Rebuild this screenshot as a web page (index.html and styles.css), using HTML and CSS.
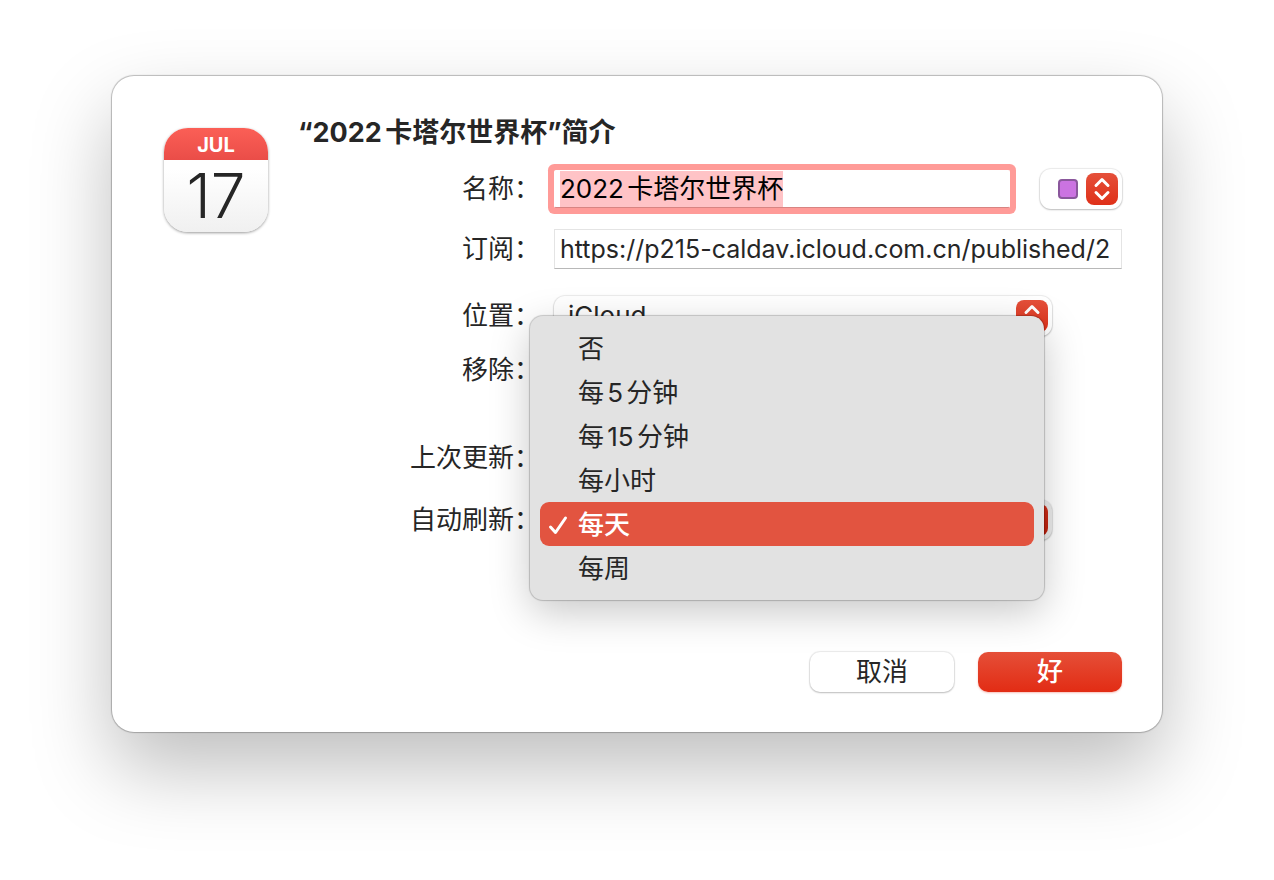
FILE: index.html
```html
<!DOCTYPE html>
<html lang="zh-CN">
<head>
    <meta charset="UTF-8">
    <meta name="viewport" content="width=device-width, initial-scale=1.0">
    <title>2022卡塔尔世界杯</title>
    <link rel="stylesheet" href="styles.css">
</head>
<body>
    <main class="dialog">
        <!-- Calendar icon -->
        <div class="calendar-icon">
            <div class="month">JUL</div>
            <div class="day">17</div>
        </div>

        <form class="content">
            <h1>“2022卡塔尔世界杯”简介</h1>

            <div class="row">
                <label for="name">名称：</label>
                <div class="field name-field">
                    <input type="text" id="name" class="text-input" value="2022卡塔尔世界杯" autocomplete="off" spellcheck="false">
                    <button type="button" class="color-btn" aria-label="颜色">
                        <span class="swatch"></span>
                        <svg class="stepper" viewBox="0 0 32 32" aria-hidden="true">
                            <path d="M10 12.500l6-6 6 6M10 19.500l6 6 6-6"/>
                        </svg>
                    </button>
                </div>
            </div>

            <div class="row row-url">
                <label for="url">订阅：</label>
                <div class="field">
                    <input type="text" id="url" class="text-input" value="https://p215-caldav.icloud.com.cn/published/2" readonly>
                </div>
            </div>

            <div class="row row-location">
                <label for="location">位置：</label>
                <div class="field popup">
                    <select id="location">
                        <option>iCloud</option>
                    </select>
                    <svg class="stepper" viewBox="0 0 32 32" aria-hidden="true">
                        <path d="M10 12.500l6-6 6 6M10 19.500l6 6 6-6"/>
                    </svg>
                </div>
            </div>

            <div class="row row-remove">
                <span class="label">移除：</span>
            </div>

            <div class="row row-updated">
                <span class="label">上次更新：</span>
            </div>

            <div class="row row-refresh">
                <label for="refresh">自动刷新：</label>
                <div class="field popup pressed">
                    <select id="refresh">
                        <option>每天</option>
                    </select>
                    <svg class="stepper" viewBox="0 0 32 32" aria-hidden="true">
                        <path d="M10 12.500l6-6 6 6M10 19.500l6 6 6-6"/>
                    </svg>

                    <!-- Open menu -->
                    <ul class="menu" role="listbox" aria-label="自动刷新">
                        <li role="option">否</li>
                        <li role="option">每5分钟</li>
                        <li role="option">每15分钟</li>
                        <li role="option">每小时</li>
                        <li role="option" class="selected" aria-selected="true">
                            <svg class="check" viewBox="0 0 20 22" aria-hidden="true">
                                <path d="M2.500 13l5 5.500L17.500 4"/>
                            </svg>
                            每天
                        </li>
                        <li role="option">每周</li>
                    </ul>
                </div>
            </div>

            <div class="actions">
                <button type="button" class="btn">取消</button>
                <button type="submit" class="btn btn-primary">好</button>
            </div>
        </form>
    </main>

    <script>
        const nameInput = document.getElementById('name');
        nameInput.focus();
        nameInput.select();
    </script>
</body>
</html>
```
FILE: styles.css
```css
/* Base styles */
* {
    box-sizing: border-box;
}

body {
    margin: 0;
    min-height: 100vh;
    padding: 76px 112px;
    background-color: #fff;
    color: #262626;
    font-family: Inter, 'Noto Sans CJK SC', sans-serif;
    font-size: 26px;
    line-height: 40px;
    text-autospace: normal;
}

input,
select,
button {
    font: inherit;
    color: inherit;
    text-autospace: inherit;
}

/* Dialog */
.dialog {
    display: flex;
    align-items: flex-start;
    gap: 30px;
    padding: 37px 40px 40px 52px;
    background-color: #fff;
    border-radius: 22px;
    box-shadow: 0 0 1px 1px rgba(0, 0, 0, 0.25), 0 36px 80px rgba(0, 0, 0, 0.26);
}

/* Calendar icon */
.calendar-icon {
    flex: none;
    width: 104px;
    height: 104px;
    margin-top: 15px;
    border-radius: 24px;
    overflow: hidden;
    text-align: center;
    background: linear-gradient(#fff 40%, #f0f0f0);
    box-shadow: 0 1px 3px rgba(0, 0, 0, 0.4);
}

.month {
    height: 32px;
    line-height: 34px;
    background: linear-gradient(#fb5f56, #ea4d48);
    color: #fff;
    font-size: 20px;
    font-weight: 700;
}

.day {
    font-size: 62px;
    font-weight: 300;
    line-height: 72px;
}

/* Form */
.content {
    flex: 1;
    min-width: 0;
}

h1 {
    margin: 0 0 16px;
    font-size: 27px;
    font-weight: 700;
    line-height: 40px;
}

.row {
    display: flex;
    gap: 14px;
    height: 40px;
}

.row-url {
    margin-top: 20px;
}

.row-location {
    margin-top: 27px;
}

.row-remove {
    margin-top: 14px;
}

.row-updated {
    margin-top: 48px;
}

.row-refresh {
    margin-top: 22px;
}

.row label,
.label {
    flex: none;
    width: 242px;
    text-align: right;
}

.field {
    flex: 1;
    min-width: 0;
    display: flex;
}

.text-input {
    flex: 1;
    min-width: 0;
    height: 40px;
    padding: 0 2px 0 5px;
    border: 1px solid #e4e4e4;
    border-bottom-color: #b8b8b8;
    border-radius: 0;
    background-color: #fff;
    outline: none;
}

#url {
    font-size: 25px;
}

.name-field {
    align-items: center;
    gap: 30px;
}

.name-field .text-input {
    height: 38px;
    color: #000;
}

.text-input:focus {
    border-color: #fff;
    border-bottom-color: #d88482;
    border-radius: 2px;
    box-shadow: 0 0 0 6px #ff9b98;
}

.text-input::selection {
    background-color: #ffc3c6;
    color: #000;
}

.color-btn {
    display: flex;
    align-items: center;
    justify-content: flex-end;
    gap: 8px;
    width: 82px;
    height: 40px;
    padding: 0 4px;
    border: none;
    border-radius: 11px;
    background-color: #fff;
    box-shadow: 0 0 1px 1px rgba(0, 0, 0, 0.08), 0 1px 2px rgba(0, 0, 0, 0.2);
}

.swatch {
    width: 20px;
    height: 20px;
    border: 2px solid #8a579c;
    border-radius: 4px;
    background-color: #cb73e1;
}

.stepper {
    width: 32px;
    height: 32px;
    border-radius: 8px;
    background: linear-gradient(#e5503a, #df3019);
    fill: none;
    stroke: #fff;
    stroke-width: 3;
    stroke-linecap: round;
    stroke-linejoin: round;
}

/* Pop-up buttons */
.popup {
    position: relative;
    margin-right: 70px;
}

.popup select {
    flex: 1;
    height: 40px;
    padding: 0 48px 0 14px;
    border: none;
    border-radius: 11px;
    appearance: none;
    background-color: #fff;
    box-shadow: 0 0 1px 1px rgba(0, 0, 0, 0.08), 0 1px 2px rgba(0, 0, 0, 0.2);
}

.popup .stepper {
    position: absolute;
    top: 4px;
    right: 4px;
    pointer-events: none;
}

.pressed select {
    background-color: #ececec;
}

.pressed .stepper {
    background: linear-gradient(#d02d18, #bd1f0c);
}

/* Menu */
.menu {
    position: absolute;
    right: 8px;
    bottom: -60px;
    left: -24px;
    margin: 0;
    padding: 10px;
    list-style: none;
    background-color: #e2e2e2;
    border-radius: 13px;
    box-shadow: 0 0 1px 1px rgba(0, 0, 0, 0.2), 0 12px 40px rgba(0, 0, 0, 0.22);
}

.menu li {
    position: relative;
    height: 44px;
    padding-left: 38px;
    line-height: 46px;
    border-radius: 9px;
}

.menu .selected {
    background-color: #e25440;
    color: #fff;
    font-weight: 500;
}

.check {
    position: absolute;
    top: 12px;
    left: 8px;
    width: 20px;
    height: 22px;
    fill: none;
    stroke: #fff;
    stroke-width: 3;
    stroke-linecap: round;
    stroke-linejoin: round;
}

/* Buttons */
.actions {
    display: flex;
    justify-content: flex-end;
    gap: 24px;
    margin-top: 112px;
}

.btn {
    width: 144px;
    height: 40px;
    padding: 0;
    border: none;
    border-radius: 10px;
    line-height: 38px;
    background-color: #fff;
    box-shadow: 0 0 1px 1px rgba(0, 0, 0, 0.08), 0 1px 2px rgba(0, 0, 0, 0.2);
}

.btn-primary {
    background: linear-gradient(#e54f38, #e22c14);
    color: #fff;
    font-weight: 500;
    box-shadow: 0 1px 2px rgba(226, 44, 20, 0.3);
}
```
